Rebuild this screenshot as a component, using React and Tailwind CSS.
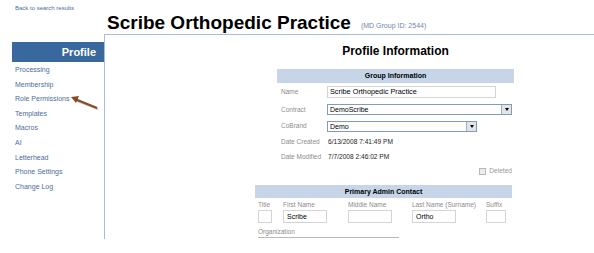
import React from "react";

const menu = [
  "Processing",
  "Membership",
  "Role Permissions",
  "Templates",
  "Macros",
  "AI",
  "Letterhead",
  "Phone Settings",
  "Change Log",
];

const Select = ({ value, width }) => (
  <div className={`flex h-[11px] items-stretch border border-[#7f9db9] bg-white ${width}`}>
    <span className="flex-1 pl-[2px] text-[7px] leading-[9px] text-black">{value}</span>
    <span className="flex w-[10px] items-center justify-center border-l border-[#9fb0c8] bg-[#e4e4e4]">
      <span className="h-0 w-0 border-x-[2.5px] border-t-[3px] border-x-transparent border-t-black" />
    </span>
  </div>
);

const Row = ({ label, h, children }) => (
  <div className={`flex items-center ${h}`}>
    <span className="w-[50px] pl-[4px] text-[6.5px] text-[#8c8c8c] whitespace-nowrap">{label}</span>
    {children}
  </div>
);

const Field = ({ label, value, ml, w }) => (
  <div className={`flex flex-col ${ml}`}>
    <span className="h-[11px] text-[6.5px] leading-[11px] text-[#8c8c8c] whitespace-nowrap">{label}</span>
    <div className={`h-[13px] border border-[#d4d4d4] bg-white pl-[3px] text-[7px] leading-[11px] text-black ${w}`}>
      {value}
    </div>
  </div>
);

export default function App() {
  return (
    <div className="relative h-[253px] w-[594px] overflow-hidden bg-white font-['Liberation_Sans',Arial,sans-serif]">
      <div className="h-[13px] pl-[15px] pt-[4px] text-[6px] leading-[8px] text-[#4a6ea5]">
        Back to search results
      </div>

      <div className="flex h-[21px] items-end pb-[2px] pl-[107px]">
        <h1 className="text-[19px] font-bold leading-[19px] text-black">Scribe Orthopedic Practice</h1>
        <span className="mb-[2px] ml-[10px] text-[7px] leading-[8px] text-[#6f86aa]">(MD Group ID: 2544)</span>
      </div>

      <div className="flex">
        <aside className="w-[104px] pt-[8px]">
          <div className="ml-[12px] flex h-[20px] items-center justify-end bg-[#39689e] pr-[8px] text-[11px] font-bold text-white">
            Profile
          </div>
          <ul className="pl-[15px] pt-[1px]">
            {menu.map((m) => (
              <li key={m} className="text-[7px] leading-[14.6px] text-[#4d6c9c]">
                {m}
              </li>
            ))}
          </ul>
        </aside>

        <main className="h-[205px] flex-1 border-l border-t border-[#a6bcda]">
          <div className="ml-[172px] w-[237px]">
            <h2 className="mt-[9px] h-[14px] text-center text-[12px] font-bold leading-[14px] text-black">
              Profile Information
            </h2>
            <div className="mt-[11px] h-[14px] bg-[#c6d6e8] text-center text-[7px] font-bold leading-[14px] text-black">
              Group Information
            </div>
            <Row label="Name" h="h-[18px]">
              <div className="h-[12px] w-[169px] border border-[#d4d4d4] pl-[2px] text-[7.3px] leading-[10px] text-black">
                Scribe Orthopedic Practice
              </div>
            </Row>
            <Row label="Contract" h="h-[17px]">
              <Select value="DemoScribe" width="w-[185px]" />
            </Row>
            <Row label="CoBrand" h="h-[16px]">
              <Select value="Demo" width="w-[150px]" />
            </Row>
            <Row label="Date Created" h="h-[16px]">
              <span className="pl-[1px] text-[6.6px] text-[#222]">6/13/2008 7:41:49 PM</span>
            </Row>
            <Row label="Date Modified" h="h-[13px]">
              <span className="pl-[1px] text-[6.6px] text-[#222]">7/7/2008 2:46:02 PM</span>
            </Row>
            <div className="flex h-[16px] items-center justify-end pr-[2px]">
              <span className="mr-[3px] h-[7px] w-[7px] border border-[#b8b8b8] bg-[#ececec]" />
              <span className="text-[6.6px] text-[#999]">Deleted</span>
            </div>
          </div>

          <div className="ml-[150px] mt-[6px] w-[257px]">
            <div className="h-[13px] bg-[#c6d6e8] text-center text-[7px] font-bold leading-[13px] text-black">
              Primary Admin Contact
            </div>
            <div className="mt-[1px] flex">
              <Field label="Title" value="" ml="ml-[3px]" w="w-[14px]" />
              <Field label="First Name" value="Scribe" ml="ml-[11px]" w="w-[44px]" />
              <Field label="Middle Name" value="" ml="ml-[21px]" w="w-[44px]" />
              <div className="flex flex-col ml-[20px] w-[44px]">
                <span className="h-[11px] text-[6.5px] leading-[11px] text-[#8c8c8c] whitespace-nowrap">Last Name (Surname)</span>
                <div className="h-[13px] border border-[#d4d4d4] bg-white pl-[3px] text-[7px] leading-[11px] text-black">Ortho</div>
              </div>
              <Field label="Suffix" value="" ml="ml-[30px]" w="w-[20px]" />
            </div>
            <div className="ml-[3px] mt-[3px] h-[12px] w-[141px] border-b border-[#b8b8b8] text-[6.5px] leading-[11px] text-[#8c8c8c]">
              Organization
            </div>
          </div>
        </main>
      </div>

      <svg className="absolute left-[66px] top-[92px]" width="36" height="22" viewBox="0 0 36 22">
        <line x1="32" y1="17" x2="9" y2="8" stroke="#c9b9ad" strokeWidth="2" />
        <line x1="31" y1="16" x2="9" y2="7" stroke="#8a4a28" strokeWidth="2" />
        <polygon points="5,5 13,4 10,11" fill="#8a4a28" />
      </svg>
    </div>
  );
}
